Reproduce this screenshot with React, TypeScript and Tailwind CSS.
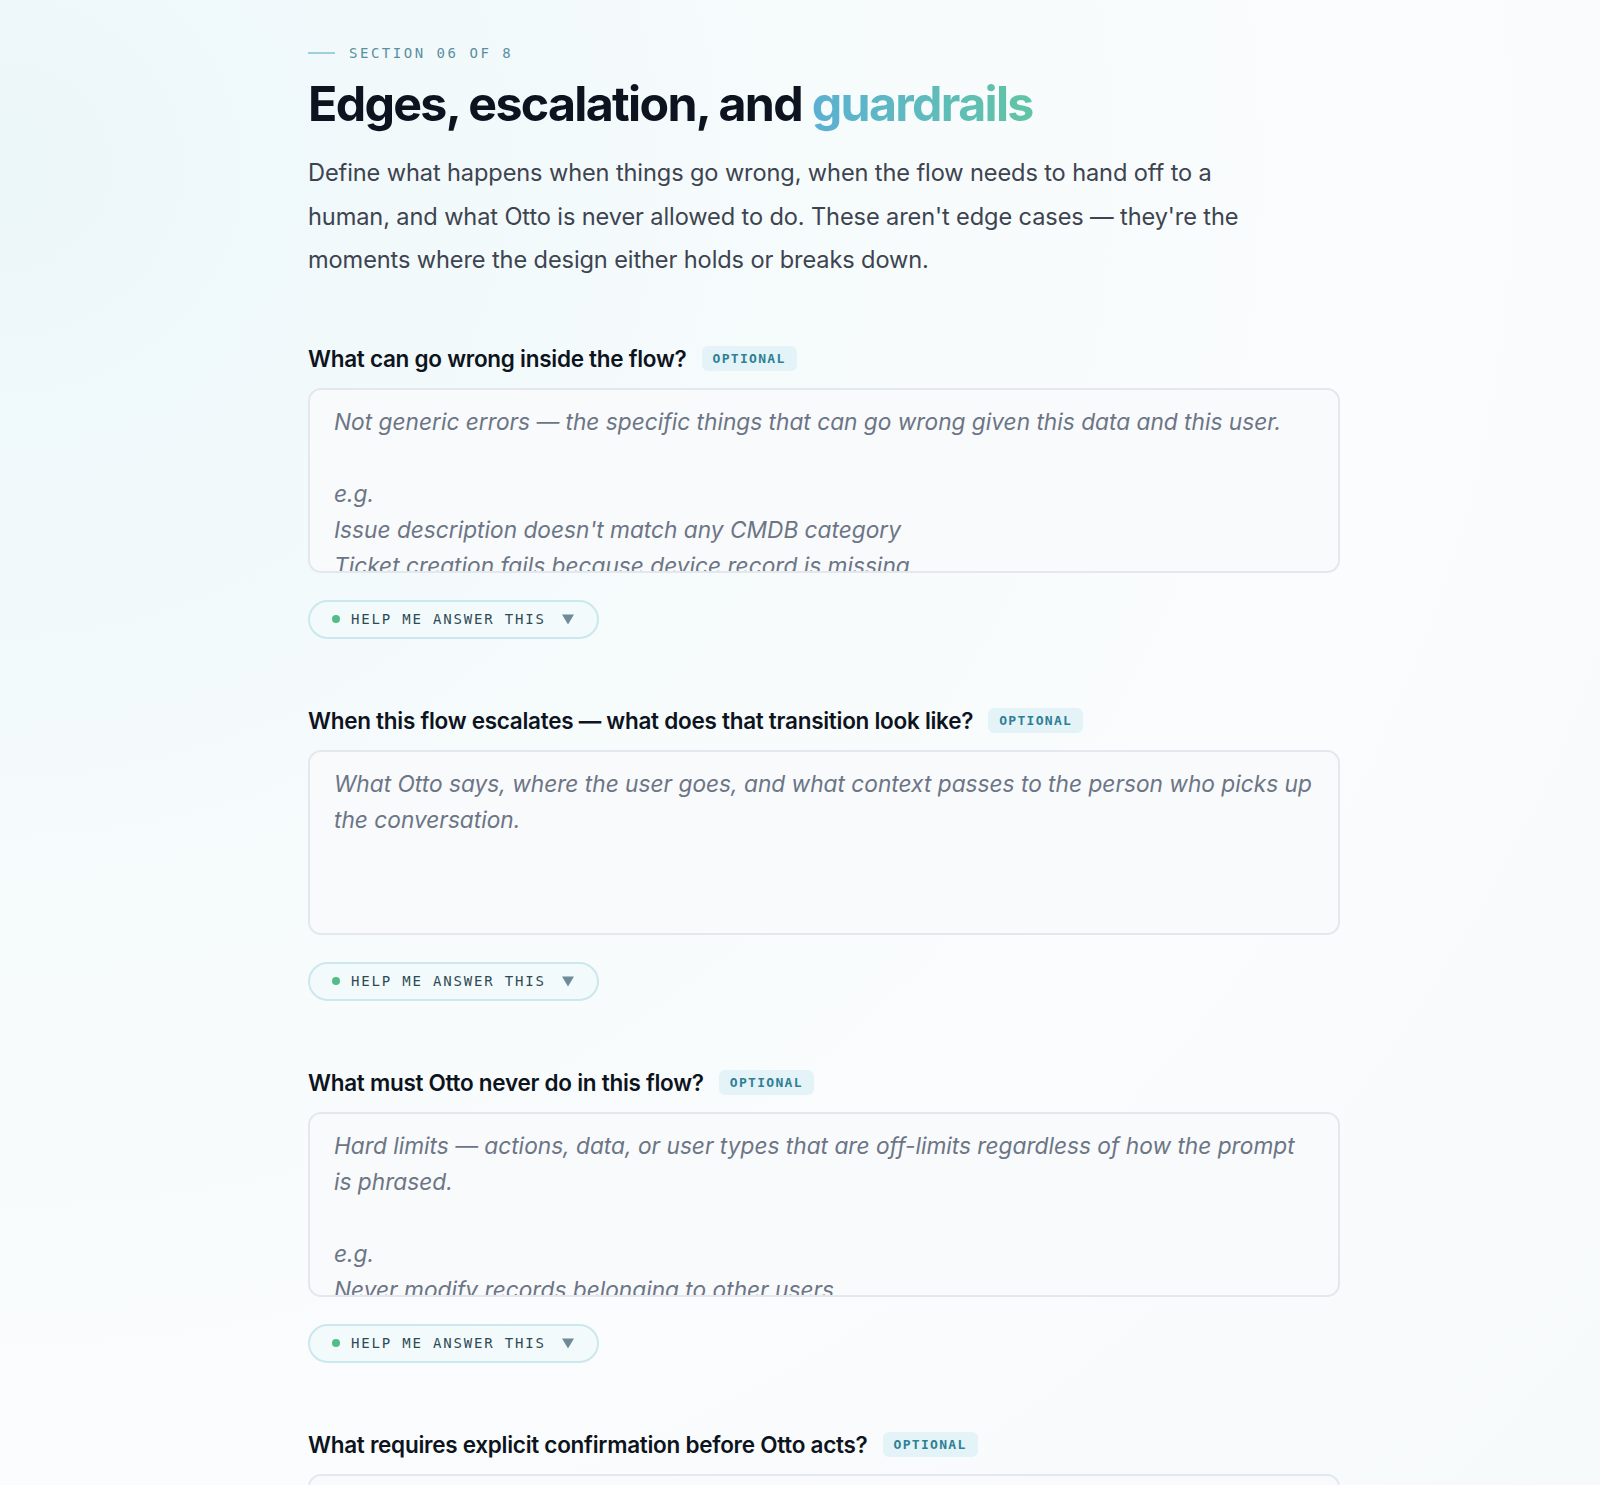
import React from "react"

const sans = "font-['Inter','Noto_Sans',sans-serif]"
const mono = "font-['DejaVu_Sans_Mono','Liberation_Mono',monospace]"

type Question = {
  title: string
  placeholder: string
}

const questions: Question[] = [
  {
    title: "What can go wrong inside the flow?",
    placeholder:
      "Not generic errors — the specific things that can go wrong given this data and this user.\n\ne.g.\nIssue description doesn't match any CMDB category\nTicket creation fails because device record is missing\nUser has no assigned device in the CMDB",
  },
  {
    title: "When this flow escalates — what does that transition look like?",
    placeholder:
      "What Otto says, where the user goes, and what context passes to the person who picks up the conversation.",
  },
  {
    title: "What must Otto never do in this flow?",
    placeholder:
      "Hard limits — actions, data, or user types that are off-limits regardless of how the prompt is phrased.\n\ne.g.\nNever modify records belonging to other users\nNever close a ticket without the user's confirmation",
  },
  {
    title: "What requires explicit confirmation before Otto acts?",
    placeholder:
      "Any step where Otto should pause and ask the user before proceeding.\n\ne.g.\nSubmitting a ticket on the user's behalf",
  },
]

function OptionalBadge() {
  return (
    <span
      className={`${mono} inline-flex h-[25px] items-center rounded-md bg-[#e3f3f7] px-[11px] text-[13px] font-bold tracking-[0.1em] text-[#2f7f96]`}
    >
      OPTIONAL
    </span>
  )
}

function HelpButton() {
  return (
    <button
      type="button"
      className="flex h-[39px] w-[291px] items-center rounded-full border-2 border-[#cbe8ee] bg-[#f2fafc] pl-[22px] pr-[22px]"
    >
      <span className="h-[8px] w-[8px] rounded-full bg-[#52bd85]" />
      <span
        className={`${mono} ml-[11px] text-[14px] tracking-[0.13em] text-[#2e4a55]`}
      >
        HELP ME ANSWER THIS
      </span>
      <svg className="ml-auto" width="14" height="12" viewBox="0 0 14 12" aria-hidden="true">
        <path d="M1 1.5h12L7 11.5z" fill="#6f8b97" />
      </svg>
    </button>
  )
}

function QuestionBlock({ q, last }: { q: Question; last: boolean }) {
  return (
    <div className={last ? "" : "mb-[68px]"}>
      <div className="flex h-[28px] items-center gap-[15px]">
        <h3 className={`${sans} text-[22.5px] font-semibold tracking-[-0.012em] text-[#0d1420]`}>
          {q.title}
        </h3>
        <OptionalBadge />
      </div>
      <textarea
        readOnly
        placeholder={q.placeholder}
        className={`${sans} mt-[15px] block h-[185px] w-full resize-none overflow-hidden rounded-[13px] border-2 border-[#e4e8ee] bg-[#f8fafc] px-[24px] pt-[14px] text-[22.7px] italic leading-[36px] text-[#3a4452] placeholder:text-[#6c7585] focus:outline-none`}
      />
      {!last && (
        <div className="mt-[27px]">
          <HelpButton />
        </div>
      )}
    </div>
  )
}

export default function App() {
  return (
    <div className="min-h-[1485px] w-full overflow-hidden bg-[radial-gradient(ellipse_at_0%_10%,#ecf7fa_0%,#f6fbfc_35%,#fafcfd_60%,#f6f9fa_100%)]">
      <div className="w-[1032px] pt-[42px]" style={{ marginLeft: 308 }}>
        <div className="flex h-[22px] items-center gap-[14px]">
          <span className="h-[2px] w-[27px] bg-[#9fcfdb]" />
          <span className={`${mono} text-[14px] tracking-[0.18em] text-[#5a8fa1]`}>
            SECTION 06 OF 8
          </span>
        </div>
        <h1
          className={`${sans} mt-[12px] text-[48.3px] font-bold leading-[56px] tracking-[-0.035em] text-[#0d1420]`}
        >
          Edges, escalation, and{" "}
          <span className="bg-gradient-to-r from-[#5cb0d3] to-[#62c4a4] bg-clip-text text-transparent">
            guardrails
          </span>
        </h1>
        <p
          className={`${sans} mt-[19px] max-w-[945px] text-[23.6px] leading-[43.5px] tracking-[-0.005em] text-[#3d4450]`}
        >
          Define what happens when things go wrong, when the flow needs to hand off to a
          human, and what Otto is never allowed to do. These aren't edge cases — they're the
          moments where the design either holds or breaks down.
        </p>
        <div className="mt-[63px]">
          {questions.map((q, i) => (
            <QuestionBlock key={q.title} q={q} last={i === questions.length - 1} />
          ))}
        </div>
      </div>
    </div>
  )
}
